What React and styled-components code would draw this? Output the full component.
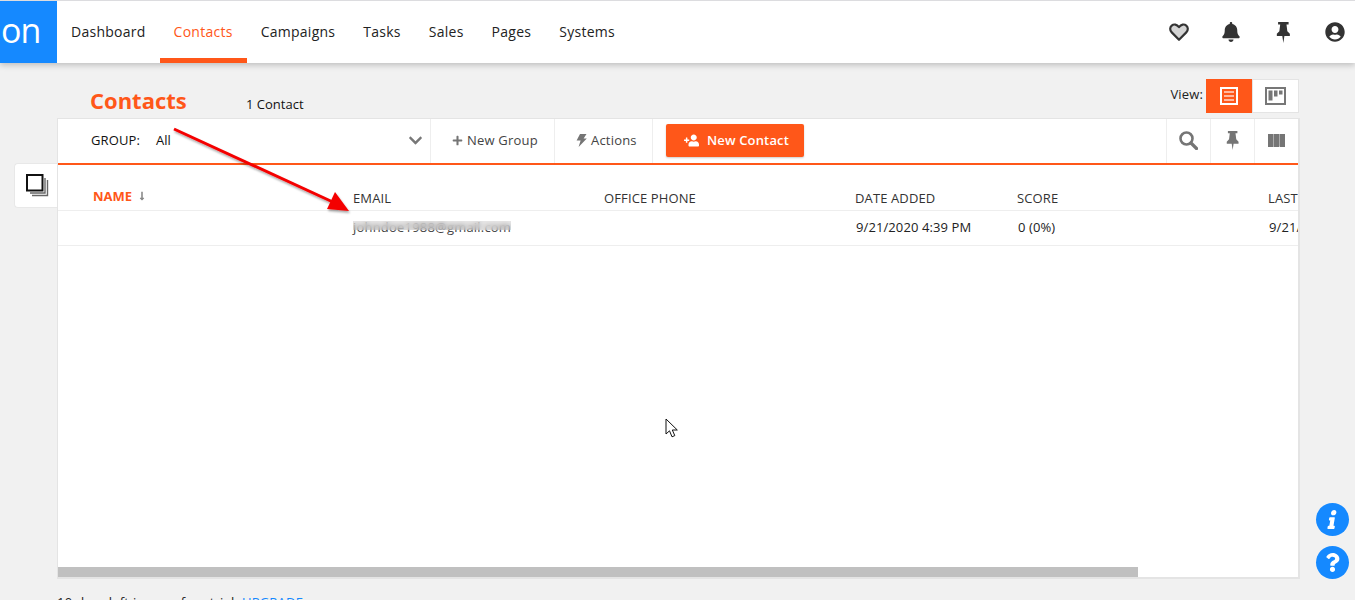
import styled, { createGlobalStyle } from 'styled-components'
import { FaBell, FaUserCircle, FaPlus, FaUserPlus, FaChevronDown, FaInfo, FaQuestion, FaLongArrowAltDown } from 'react-icons/fa'

const orange = '#ff5719'
const line = '#e4e4e4'

const GlobalStyle = createGlobalStyle`
    html, body {
        margin: 0;
        height: 100%;
        overflow: hidden;
        background: #f1f1f1;
        font-family: 'Open Sans', sans-serif;
        color: #222;
    }
`

const Page = styled.div`
    position: relative;
    height: 600px;
    overflow: hidden;
`

const Header = styled.header`
    height: 62px;
    display: flex;
    align-items: stretch;
    background: #fff;
    border-top: 1px solid #dcdcdf;
    box-shadow: 0 2px 6px rgba(0, 0, 0, 0.22);
`

const Logo = styled.div`
    width: 57px;
    background: #1589ff;
    color: #fff;
    font-size: 34px;
    font-weight: 400;
    line-height: 58px;
    letter-spacing: -1px;
    overflow: hidden;
    text-indent: 1px;
`

const Nav = styled.nav`
    display: flex;
    flex: 1;
`

const NavItem = styled.a`
    padding: 0 14px;
    font-size: 14px;
    letter-spacing: 0.26px;
    line-height: 61px;
    height: 57px;
    color: ${p => (p.$active ? orange : '#222')};
    border-bottom: 5px solid ${p => (p.$active ? orange : 'transparent')};
`

const HeaderIcons = styled.div`
    display: flex;
    align-items: center;
    gap: 32px;
    padding-right: 10px;
    color: #333;
    font-size: 20px;
`

const IconSlot = styled.span`
    width: 20px;
    display: flex;
    justify-content: center;
`

const Main = styled.main`
    display: flex;
    align-items: flex-start;
`

const Gutter = styled.aside`
    width: 57px;
    flex: none;
    display: flex;
    justify-content: flex-end;
    padding-top: 100px;
`

const SideTab = styled.div`
    width: 40px;
    height: 43px;
    background: #fff;
    border: 1px solid #e8e8e8;
    border-right: 0;
    border-radius: 4px 0 0 4px;
    display: flex;
    align-items: center;
    justify-content: center;
    padding-left: 2px;
`

const Content = styled.div`
    width: 1242px;
`

const TitleRow = styled.div`
    height: 55px;
    display: flex;
    align-items: flex-start;
`

const Title = styled.h1`
    margin: 22px 0 0 33px;
    width: 156px;
    color: ${orange};
    font-size: 22px;
    font-weight: 700;
    line-height: 30px;
`

const Count = styled.span`
    margin-top: 32px;
    font-size: 13px;
    line-height: 18px;
    color: #111;
    font-weight: 500;
`

const ViewBox = styled.div`
    margin: 16px 0 0 auto;
    display: flex;
    align-items: center;
`

const ViewLabel = styled.span`
    font-size: 13px;
    letter-spacing: 0.15px;
    margin: 0 3px 4px 0;
    color: #222;
`

const ViewBtn = styled.div`
    width: ${p => (p.$active ? 44 : 45)}px;
    height: 32px;
    display: flex;
    align-items: center;
    justify-content: center;
    background: ${p => (p.$active ? orange : '#fff')};
    border: 1px solid ${p => (p.$active ? orange : line)};
`

const Panel = styled.section`
    height: 458px;
    background: #fff;
    border: 1px solid ${line};
    border-right-width: 2px;
    border-bottom-width: 2px;
    width: 1240px;
    position: relative;
    overflow: hidden;
`

const Toolbar = styled.div`
    height: 44px;
    display: flex;
    align-items: stretch;
    border-bottom: 2px solid ${orange};
`

const GroupPicker = styled.div`
    width: 372px;
    flex: none;
    display: flex;
    align-items: center;
    font-size: 13px;
    box-sizing: border-box;
    padding: 0 7px 2px 33px;
    color: #111;
`

const GroupLabel = styled.span`
    width: 65px;
    letter-spacing: 0.1px;
`

const Chevron = styled.span`
    margin-left: auto;
    color: #777;
    font-size: 15px;
    display: flex;
`

const ToolBtn = styled.div`
    display: flex;
    align-items: center;
    gap: 4px;
    width: ${p => p.$w}px;
    padding: 0 0 2px 21px;
    box-sizing: border-box;
    flex: none;
    border-left: 1px solid #eee;
    font-size: 13px;
    letter-spacing: 0.2px;
    color: #444;

    svg {
        color: #757575;
    }
`

const IconBtn = styled.div`
    display: flex;
    align-items: center;
    justify-content: center;
    width: 44px;
    padding-bottom: 2px;
    box-sizing: border-box;
    flex: none;
    border-left: 1px solid #eee;
`

const PrimaryWrap = styled.div`
    flex: 1;
    display: flex;
    align-items: center;
    padding: 0 0 2px 13px;
    border-left: 1px solid #eee;
`

const PrimaryBtn = styled.button`
    width: 138px;
    height: 33px;
    display: flex;
    align-items: center;
    justify-content: center;
    gap: 8px;
    border: 0;
    border-radius: 2px;
    padding: 0 0 0 3px;
    background: ${orange};
    color: #fff;
    font-family: inherit;
    font-size: 13px;
    font-weight: 600;
    letter-spacing: 0.15px;
    box-shadow: 0 1px 2px rgba(0, 0, 0, 0.2);
`

const Flipped = styled.span`
    display: flex;
    transform: scaleX(-1);
    font-size: 15px;
`

const Row = styled.div`
    display: grid;
    grid-template-columns: 295px 251px 251px 162px 251px 200px;
    height: ${p => p.$h}px;
    border-bottom: 1px solid #eee;
    white-space: nowrap;
    color: #222;
`

const HeadCell = styled.div`
    padding-top: 24px;
    line-height: 18px;
    font-size: 13px;
    letter-spacing: 0.12px;
    color: #333;
`

const NameHead = styled.div`
    padding: 22px 0 0 35px;
    font-size: 13px;
    color: ${orange};
    font-weight: 700;
    display: flex;
    align-items: center;
    height: 18px;
    gap: 5px;

    svg {
        color: #888;
        font-size: 10px;
    }
`

const Cell = styled.div`
    line-height: 32px;
    font-size: 13px;
    letter-spacing: 0.1px;
    padding-left: ${p => (p.$email ? 0 : 1)}px;
`

const MaskedEmail = styled.span`
    position: relative;
    display: inline-block;
    color: #444;
    letter-spacing: 0.2px;
`

const Mask = styled.span`
    position: absolute;
    left: 0;
    right: 0;
    top: 10px;
    height: 9px;
    backdrop-filter: blur(2.5px);
    background: rgba(190, 185, 185, 0.35);
`

const ScrollThumb = styled.div`
    position: absolute;
    left: 0;
    bottom: 0;
    width: 1080px;
    height: 10px;
    background: #c0c0c0;
`

const Footer = styled.p`
    margin: 14px 0 0;
    font-size: 13px;
    letter-spacing: 0.2px;
    word-spacing: 0.3px;
    line-height: 18px;
    color: #222;

    a {
        color: #1589ff;
    }
`

const Arrow = styled.svg`
    position: absolute;
    left: 170px;
    top: 124px;
    pointer-events: none;
`

const Cursor = styled.svg`
    position: absolute;
    left: 665px;
    top: 418px;
`

const RoundStack = styled.div`
    position: absolute;
    left: 1316px;
    top: 503px;
    display: flex;
    flex-direction: column;
    gap: 10px;
`

const Round = styled.div`
    width: 33px;
    height: 33px;
    border-radius: 50%;
    background: #1589ff;
    color: #fff;
    display: flex;
    align-items: center;
    justify-content: center;
    font-size: 19px;

    svg {
        transform: ${p => (p.$slant ? 'skewX(-10deg)' : 'none')};
    }
`

function HeartIcon() {
    return (
        <svg width="22" height="20" viewBox="0 0 22 20">
            <path d="M11 18.5 3 10.4C.6 8 .9 4.6 3 2.9 5.3 1 8.6 1.5 11 4.6 13.4 1.5 16.7 1 19 2.9c2.1 1.7 2.4 5.1 0 7.5z" fill="#d4d4d4" stroke="#333" strokeWidth="2.4" strokeLinejoin="round" />
        </svg>
    )
}

function PinIcon({ color, height }) {
    return (
        <svg width={height * 0.7} height={height} viewBox="0 0 14 20">
            <path d="M2 0h10v2.4h-2l.8 6.4 2.4 2.4v2.2H8L7 20l-1-6.6H.8v-2.2l2.4-2.4L4 2.4H2z" fill={color} />
        </svg>
    )
}

function SearchIcon() {
    return (
        <svg width="19" height="19" viewBox="0 0 19 19">
            <circle cx="7.5" cy="7.5" r="6" fill="none" stroke="#757575" strokeWidth="2.6" />
            <path d="M12 12l5.5 5.5" stroke="#757575" strokeWidth="3.2" strokeLinecap="round" />
        </svg>
    )
}

function BoltIcon() {
    return (
        <svg width="11" height="13" viewBox="0 0 11 13">
            <path d="M4 0h6.5L7.6 4.4h3.2L2.6 13l2-6.4H.6z" fill="#757575" />
        </svg>
    )
}

function ListIcon() {
    return (
        <svg width="18" height="18" viewBox="0 0 18 18">
            <rect x="1" y="1" width="16" height="16" fill="none" stroke="#fff" strokeWidth="2" />
            <path d="M4 5h10M4 9h10M4 13h10" stroke="#ffb8a0" strokeWidth="2" />
        </svg>
    )
}

function BoardIcon() {
    return (
        <svg width="21" height="18" viewBox="0 0 21 18">
            <rect x="1" y="1" width="19" height="16" fill="none" stroke="#777" strokeWidth="2" />
            <path d="M3.5 3.5h4v10h-4zM9 3.5h3.5v6H9zM14 3.5h3.5v4H14z" fill="#777" />
        </svg>
    )
}

function ColumnsIcon() {
    return (
        <svg width="17" height="13" viewBox="0 0 17 13">
            <path d="M0 0h5.4v13H0zM5.8 0h5.4v13H5.8zM11.6 0H17v13h-5.4z" fill="#757575" />
        </svg>
    )
}

function StackIcon() {
    return (
        <svg width="23" height="23" viewBox="0 0 23 23">
            <path d="M21.5 6v15.5H6M19 4v15H4" fill="none" stroke="#666" strokeWidth="1.4" />
            <rect x="1" y="1" width="15.5" height="15.5" fill="#fff" stroke="#111" strokeWidth="2" />
        </svg>
    )
}

export default function App() {
    return (
        <Page>
            <GlobalStyle />
            <Header>
                <Logo>on</Logo>
                <Nav>
                    <NavItem>Dashboard</NavItem>
                    <NavItem $active>Contacts</NavItem>
                    <NavItem>Campaigns</NavItem>
                    <NavItem>Tasks</NavItem>
                    <NavItem>Sales</NavItem>
                    <NavItem>Pages</NavItem>
                    <NavItem>Systems</NavItem>
                </Nav>
                <HeaderIcons>
                    <IconSlot><HeartIcon /></IconSlot>
                    <IconSlot><FaBell /></IconSlot>
                    <IconSlot><PinIcon color="#333" height={21} /></IconSlot>
                    <IconSlot><FaUserCircle /></IconSlot>
                </HeaderIcons>
            </Header>
            <Main>
                <Gutter>
                    <SideTab><StackIcon /></SideTab>
                </Gutter>
                <Content>
                    <TitleRow>
                        <Title>Contacts</Title>
                        <Count>1 Contact</Count>
                        <ViewBox>
                            <ViewLabel>View:</ViewLabel>
                            <ViewBtn $active><ListIcon /></ViewBtn>
                            <ViewBtn><BoardIcon /></ViewBtn>
                        </ViewBox>
                    </TitleRow>
                    <Panel>
                        <Toolbar>
                            <GroupPicker>
                                <GroupLabel>GROUP:</GroupLabel>
                                <span>All</span>
                                <Chevron><FaChevronDown /></Chevron>
                            </GroupPicker>
                            <ToolBtn $w={124}><FaPlus size={11} />New Group</ToolBtn>
                            <ToolBtn $w={98}><BoltIcon />Actions</ToolBtn>
                            <PrimaryWrap>
                                <PrimaryBtn>
                                    <Flipped><FaUserPlus /></Flipped>
                                    New Contact
                                </PrimaryBtn>
                            </PrimaryWrap>
                            <IconBtn><SearchIcon /></IconBtn>
                            <IconBtn><PinIcon color="#757575" height={19} /></IconBtn>
                            <IconBtn><ColumnsIcon /></IconBtn>
                        </Toolbar>
                        <Row $h={45}>
                            <NameHead>NAME <FaLongArrowAltDown /></NameHead>
                            <HeadCell>EMAIL</HeadCell>
                            <HeadCell>OFFICE PHONE</HeadCell>
                            <HeadCell>DATE ADDED</HeadCell>
                            <HeadCell>SCORE</HeadCell>
                            <HeadCell>LAST ACTIVITY</HeadCell>
                        </Row>
                        <Row $h={34}>
                            <Cell />
                            <Cell $email>
                                <MaskedEmail>johndoe1988@gmail.com<Mask /></MaskedEmail>
                            </Cell>
                            <Cell />
                            <Cell>9/21/2020 4:39 PM</Cell>
                            <Cell>0 (0%)</Cell>
                            <Cell>9/21/2020 4:39 PM</Cell>
                        </Row>
                        <ScrollThumb />
                    </Panel>
                    <Footer>10 days left in your free trial. <a>UPGRADE</a></Footer>
                </Content>
            </Main>
            <Arrow width="190" height="95" viewBox="0 0 190 95">
                <defs>
                    <filter id="arrowShadow" x="-10%" y="-20%" width="120%" height="150%">
                        <feDropShadow dx="1" dy="2" stdDeviation="1" floodColor="#000" floodOpacity="0.35" />
                    </filter>
                </defs>
                <g filter="url(#arrowShadow)">
                    <path d="M4 5 165 79" stroke="#f40000" strokeWidth="3" />
                    <path d="M179 87 157 85 165 68z" fill="#f40000" />
                </g>
            </Arrow>
            <Cursor width="14" height="21" viewBox="0 0 14 21">
                <path d="M1 1v15l3.5-3.2 2.5 6 2.8-1.2-2.5-5.6h5z" fill="#fff" stroke="#111" strokeWidth="1" />
            </Cursor>
            <RoundStack>
                <Round $slant><FaInfo /></Round>
                <Round><FaQuestion /></Round>
            </RoundStack>
        </Page>
    )
}
